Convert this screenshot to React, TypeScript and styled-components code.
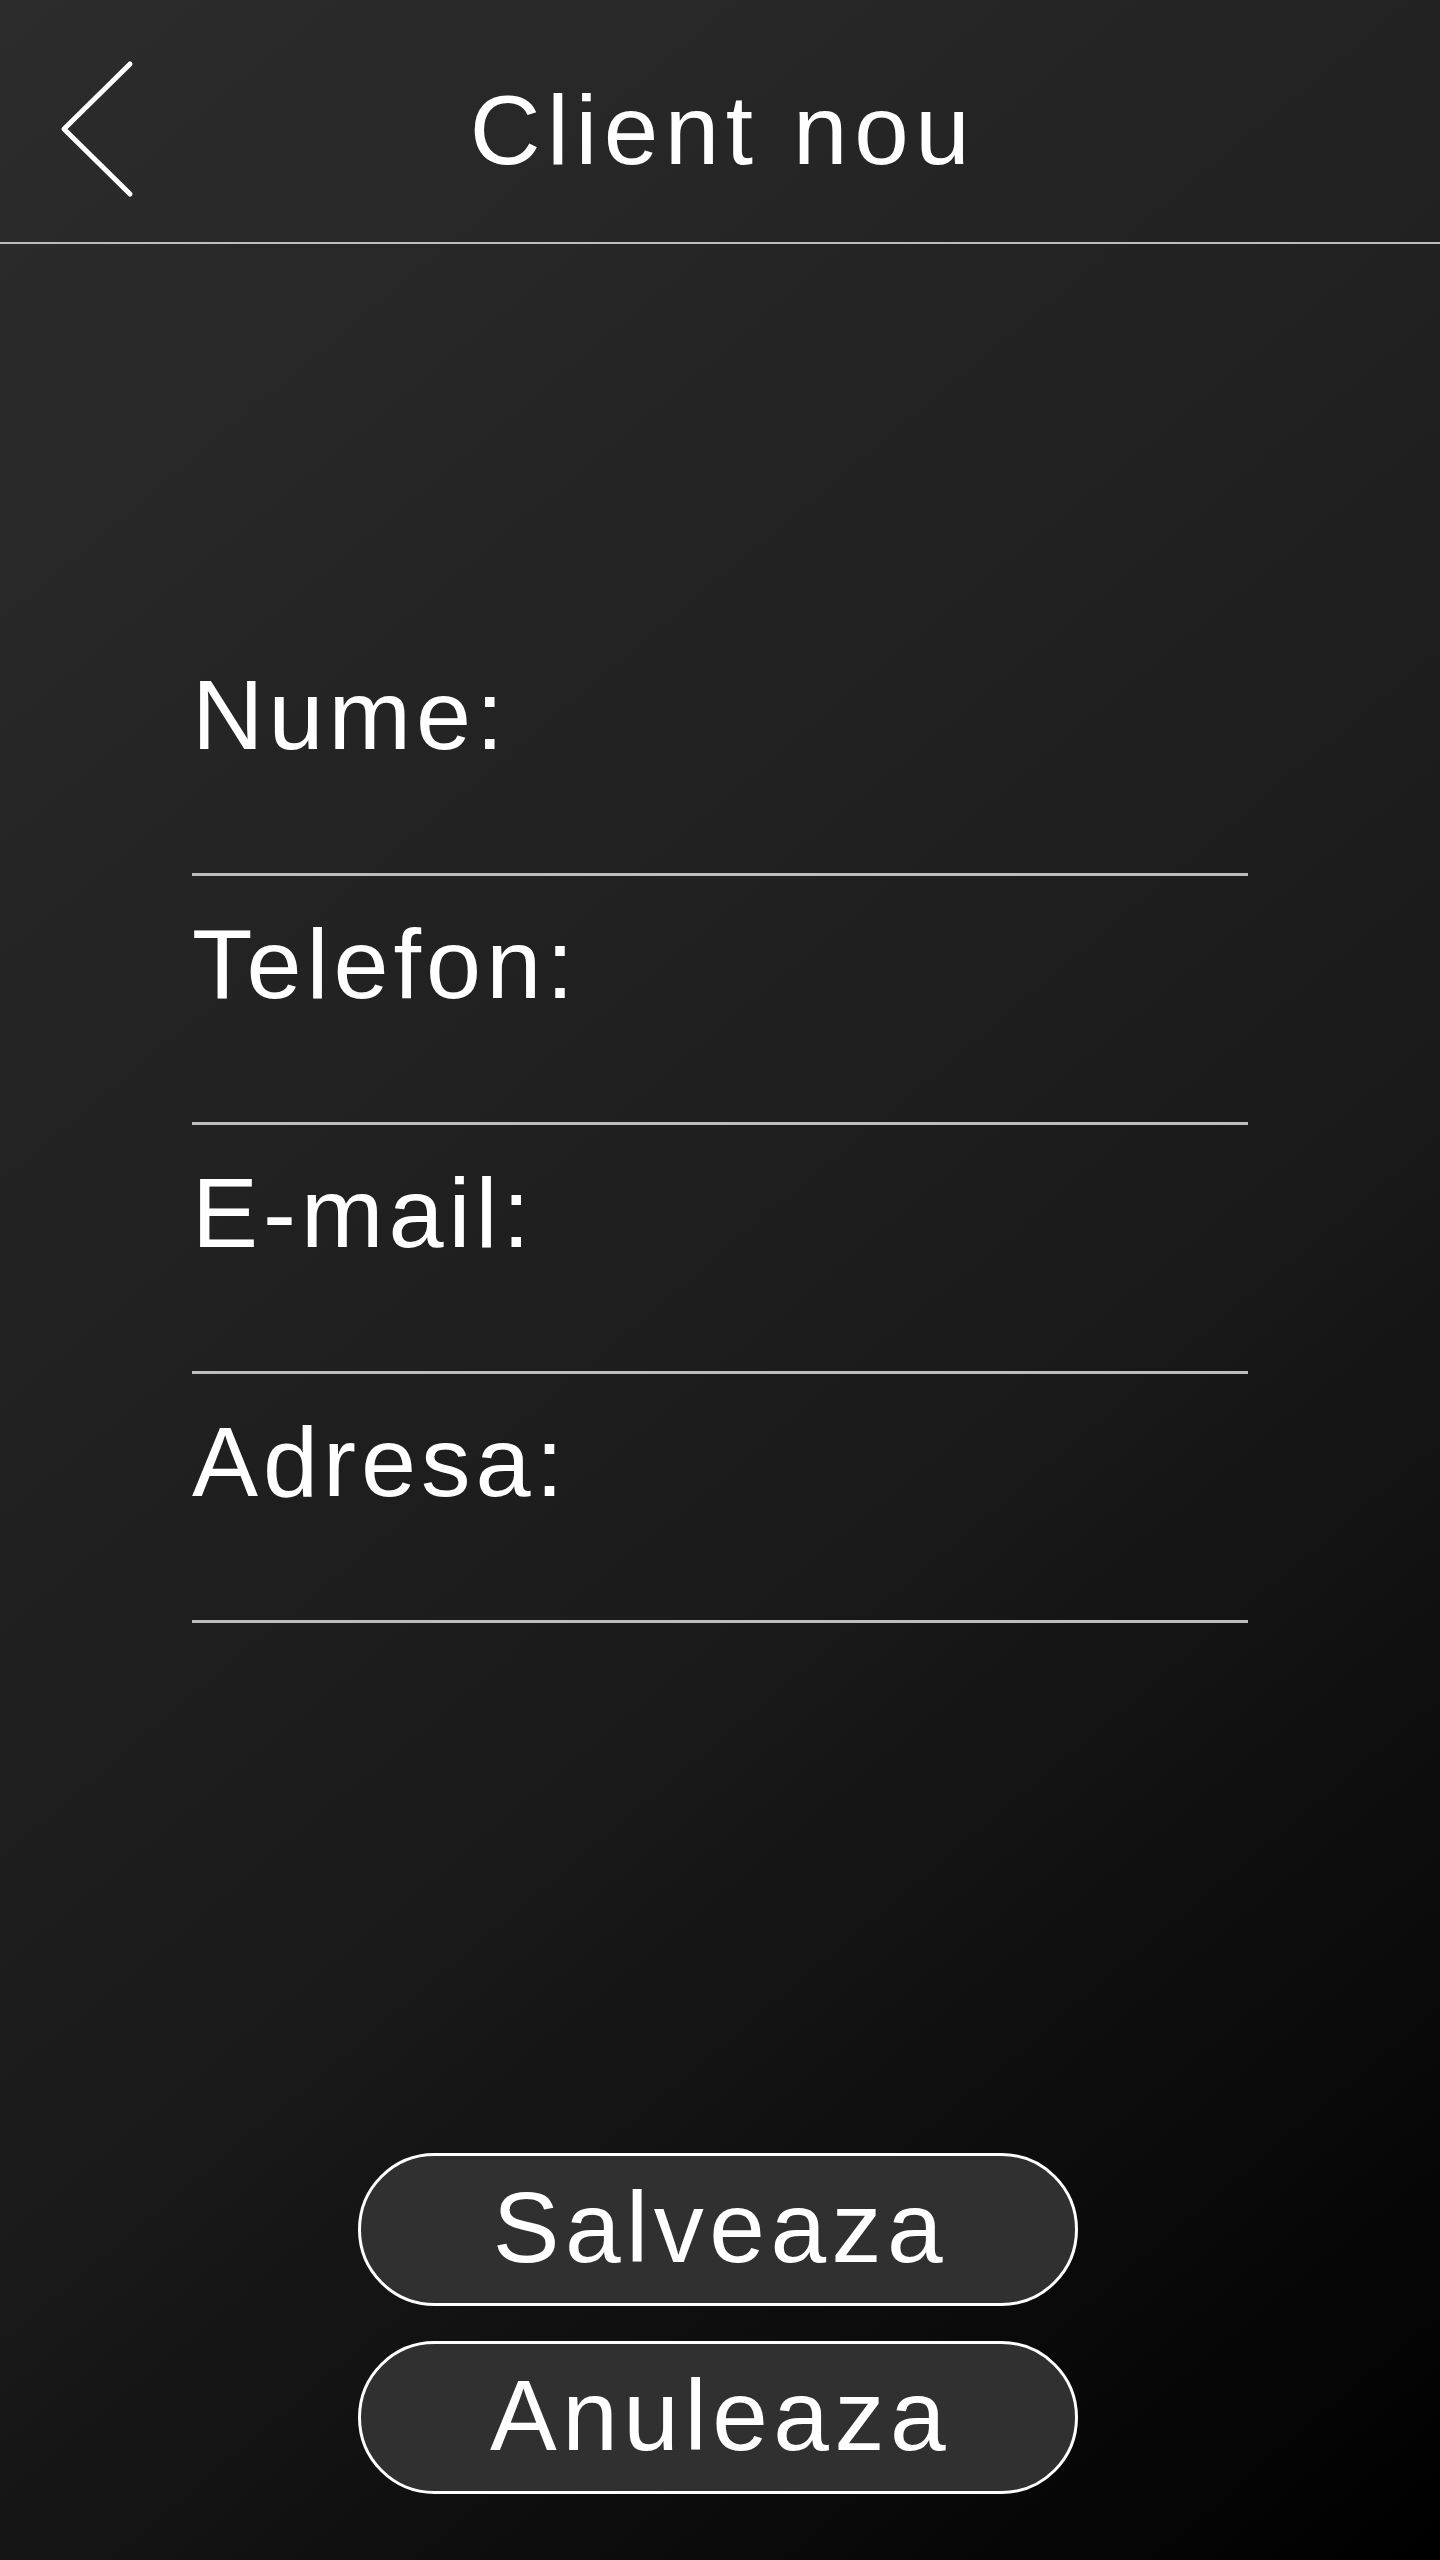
import React from "react";
import styled, { createGlobalStyle } from "styled-components";

const GlobalStyle = createGlobalStyle`
  html, body {
    margin: 0;
    padding: 0;
    background: #000;
  }
  * {
    box-sizing: border-box;
  }
`;

const Screen = styled.div`
  min-height: 100vh;
  display: flex;
  flex-direction: column;
  background: linear-gradient(140deg, #2c2c2c 0%, #1b1b1b 58%, #000000 100%);
  color: #ffffff;
  font-family: "Liberation Sans", Arial, sans-serif;
`;

const Header = styled.header`
  height: 244px;
  padding-top: 18px;
  display: grid;
  grid-template-columns: 1fr auto 1fr;
  align-items: center;
  border-bottom: 2px solid #bdbdbd;
`;

const BackButton = styled.button`
  justify-self: start;
  margin-left: 60px;
  padding: 0;
  border: none;
  background: transparent;
  display: flex;
  align-items: center;
  cursor: pointer;
`;

const Title = styled.h1`
  margin: 0;
  font-size: 98px;
  font-weight: 400;
  letter-spacing: 6.5px;
  line-height: 1;
  padding-left: 6px;
`;

const Form = styled.form`
  width: 1056px;
  margin: 383px auto 0;
  display: flex;
  flex-direction: column;
`;

const Field = styled.label`
  display: block;
  padding: 38px 0 109px;
  border-bottom: 3px solid #bdbdbd;
`;

const FieldLabel = styled.span`
  display: block;
  font-size: 99px;
  line-height: 1;
  letter-spacing: 5px;
  color: #ffffff;
`;

const Actions = styled.div`
  margin-top: auto;
  padding: 0 4px 66px 0;
  display: flex;
  flex-direction: column;
  align-items: center;
  gap: 35px;
`;

const PillButton = styled.button`
  width: 720px;
  height: 153px;
  border-radius: 80px;
  border: 3px solid #ffffff;
  background: #303030;
  color: #ffffff;
  font-family: "Liberation Sans", Arial, sans-serif;
  font-size: 100px;
  line-height: 1;
  letter-spacing: 5.5px;
  padding: 0 0 6px 5px;
  cursor: pointer;
`;

const ChevronLeft = () => (
  <svg width="74" height="140" viewBox="0 0 74 140" fill="none">
    <polyline
      points="70,4 4,69 70,134"
      stroke="#ffffff"
      strokeWidth="5"
      strokeLinecap="round"
      strokeLinejoin="round"
    />
  </svg>
);

const fields = ["Nume:", "Telefon:", "E-mail:", "Adresa:"];

export default function App() {
  return (
    <>
      <GlobalStyle />
      <Screen>
        <Header>
          <BackButton aria-label="Inapoi">
            <ChevronLeft />
          </BackButton>
          <Title>Client nou</Title>
          <div />
        </Header>
        <Form onSubmit={(e) => e.preventDefault()}>
          {fields.map((f) => (
            <Field key={f}>
              <FieldLabel>{f}</FieldLabel>
            </Field>
          ))}
        </Form>
        <Actions>
          <PillButton type="button">Salveaza</PillButton>
          <PillButton type="button">Anuleaza</PillButton>
        </Actions>
      </Screen>
    </>
  );
}
